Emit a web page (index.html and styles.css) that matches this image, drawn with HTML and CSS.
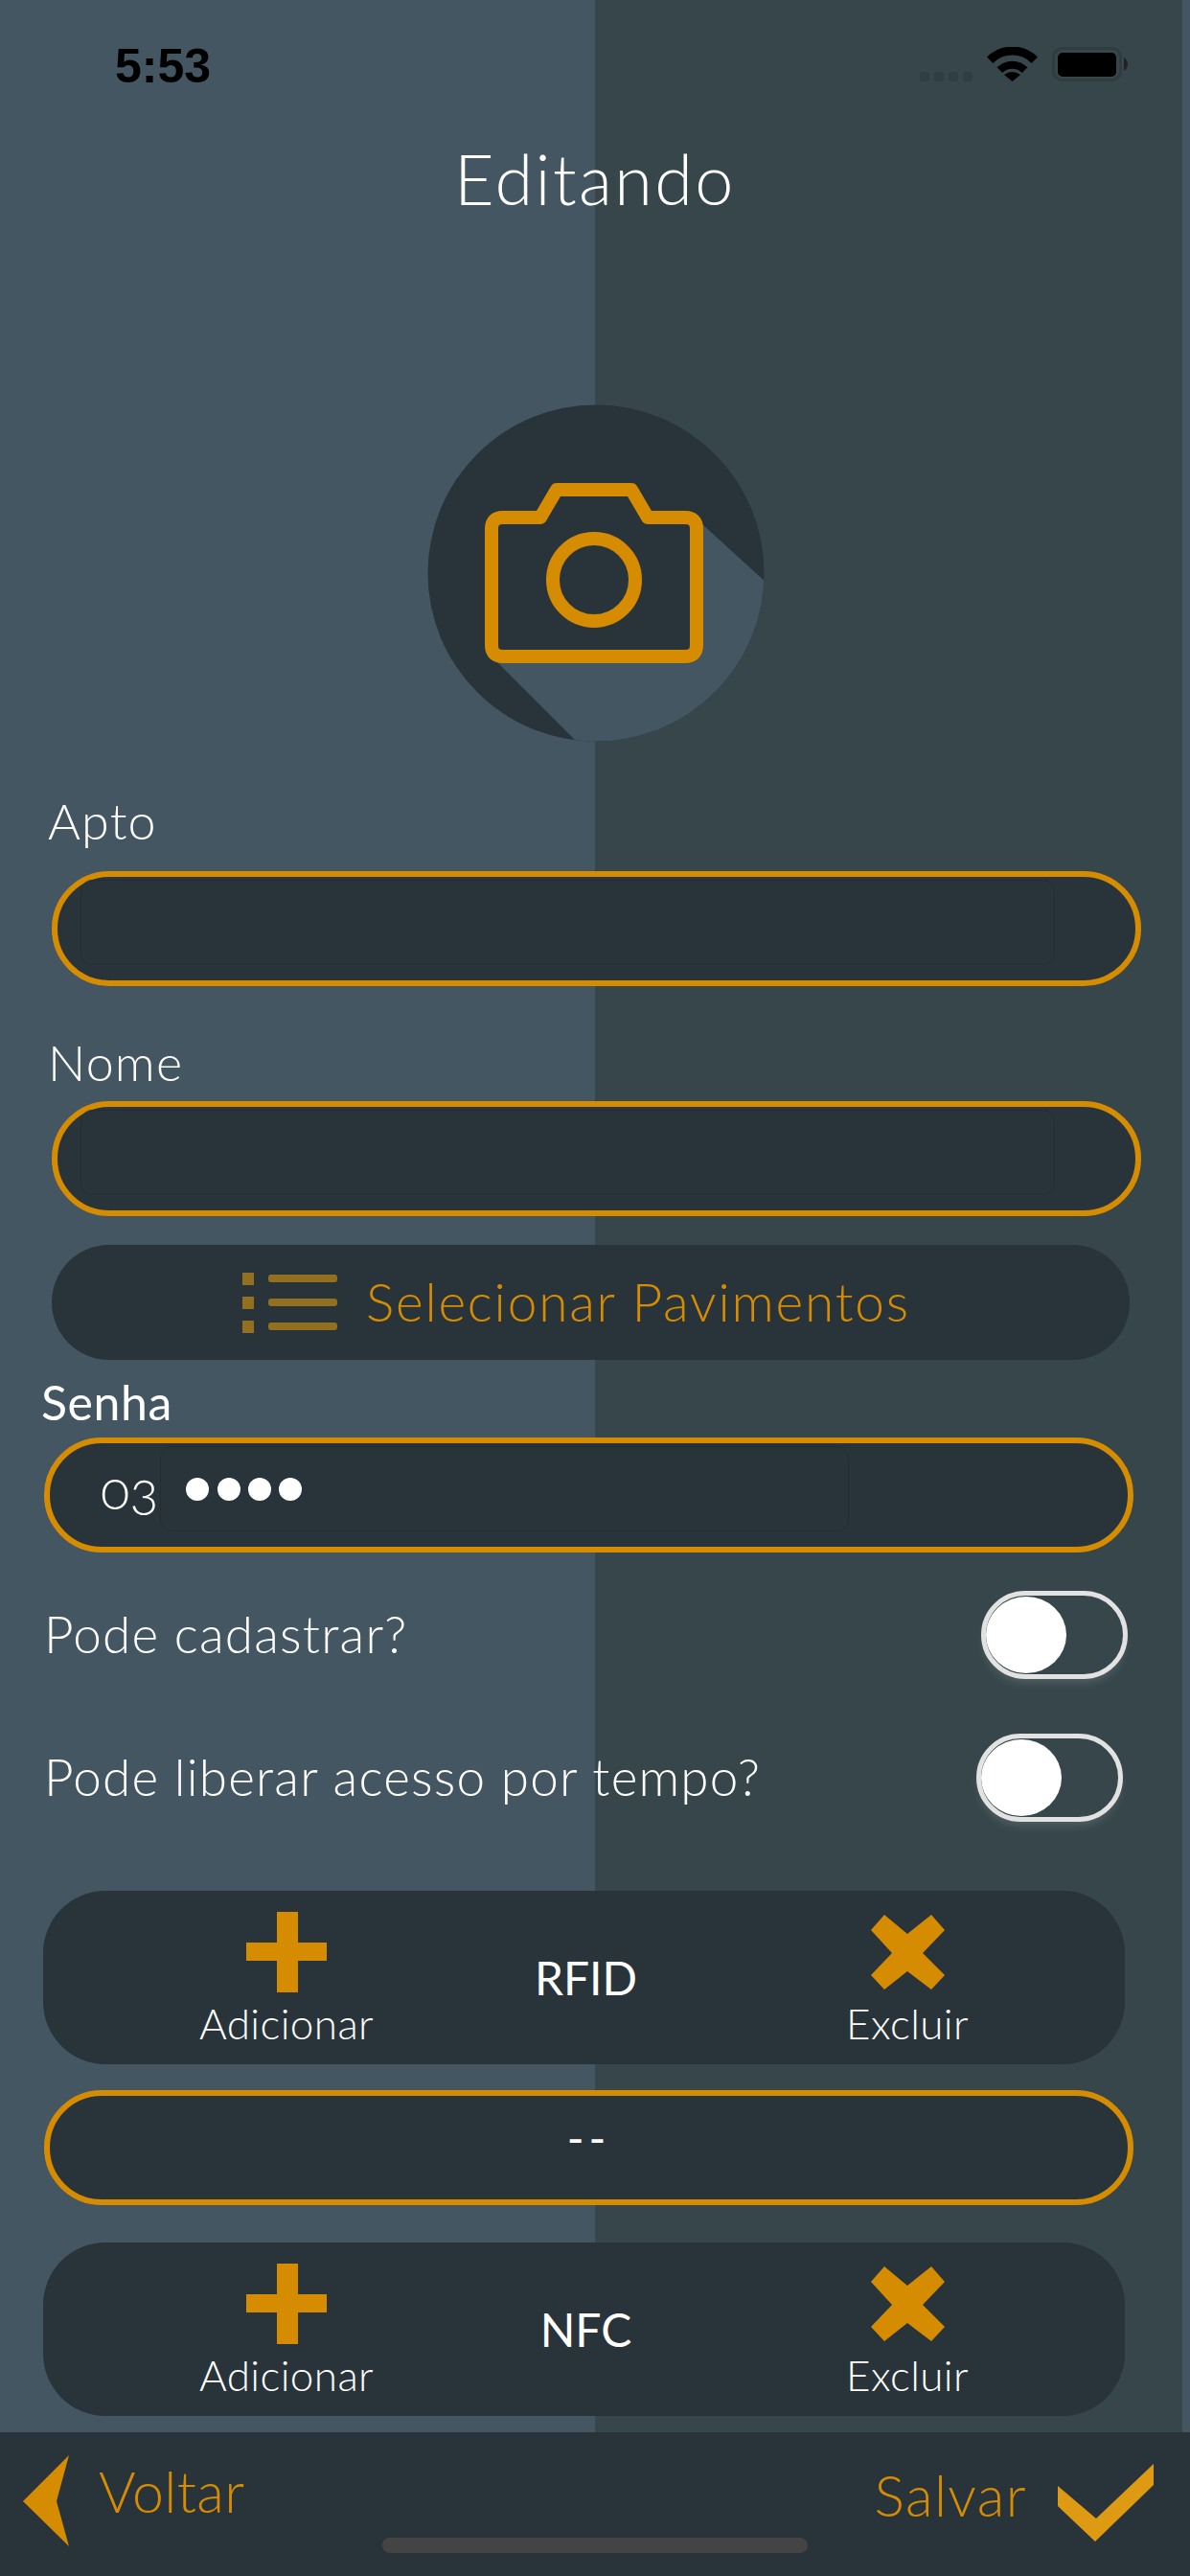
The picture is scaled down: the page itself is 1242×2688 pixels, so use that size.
FILE: index.html
```html
<!DOCTYPE html>
<html lang="pt-BR">
<head>
    <meta charset="UTF-8">
    <meta name="viewport" content="width=device-width, initial-scale=1.0">
    <title>Editando</title>
    <link rel="stylesheet" href="styles.css">
</head>
<body>
    <div class="screen">
        <div class="status">
            <span class="time">5:53</span>
            <svg class="status-icons" viewBox="960 49 217 36">
                <rect x="960" y="75" width="10" height="10" rx="3" fill="#303d42"/>
                <rect x="975" y="75" width="10" height="10" rx="3" fill="#303d42"/>
                <rect x="990" y="75" width="10" height="10" rx="3" fill="#303d42"/>
                <rect x="1005" y="75" width="10" height="10" rx="3" fill="#303d42"/>
                <path d="M1033.2 62.7A33 33 0 0 1 1079.8 62.7" fill="none" stroke="#000" stroke-width="9"/>
                <path d="M1043.4 73.1A18.5 18.5 0 0 1 1069.6 73.1" fill="none" stroke="#000" stroke-width="8"/>
                <path d="M1048 78Q1056.5 72 1065 78L1056.5 85Z" fill="#000"/>
                <rect x="1099.5" y="50.5" width="70" height="33" rx="9" fill="none" stroke="#2f3c40" stroke-width="3"/>
                <rect x="1104" y="55" width="61" height="25" rx="5" fill="#000"/>
                <path d="M1173 60Q1177 63 1177 67Q1177 71 1173 74Z" fill="#222"/>
            </svg>
        </div>

        <h1 class="title">Editando</h1>

        <svg class="photo" viewBox="446 422 352 352">
            <defs>
                <clipPath id="photo-clip"><circle cx="622" cy="598" r="175.5"/></clipPath>
            </defs>
            <g clip-path="url(#photo-clip)">
                <rect x="446" y="422" width="352" height="352" fill="#28343a"/>
                <polygon points="733,547 800,608 800,780 608,780 518,690" fill="#435662"/>
            </g>
            <path d="M513 552Q513 540 525 540H564L581 511H659L676 540H715Q727 540 727 552V673Q727 685 715 685H525Q513 685 513 673Z" fill="#28343a" stroke="#d68c00" stroke-width="14" stroke-linejoin="round"/>
            <circle cx="620" cy="605" r="43" fill="none" stroke="#d68c00" stroke-width="14"/>
        </svg>

        <label class="field-label label-apto">Apto</label>
        <div class="pill pill-apto"><div class="pill-input"></div></div>

        <label class="field-label label-nome">Nome</label>
        <div class="pill pill-nome"><div class="pill-input"></div></div>

        <div class="select-button">
            <div class="list-icon">
                <div class="list-row"><span class="list-dot"></span><span class="list-line"></span></div>
                <div class="list-row"><span class="list-dot"></span><span class="list-line"></span></div>
                <div class="list-row"><span class="list-dot"></span><span class="list-line"></span></div>
            </div>
            <span class="select-text">Selecionar Pavimentos</span>
        </div>

        <label class="field-label label-senha">Senha</label>
        <div class="pill pill-senha">
            <span class="prefix">03</span>
            <div class="pill-input password">
                <span class="dot"></span><span class="dot"></span><span class="dot"></span><span class="dot"></span>
            </div>
        </div>

        <div class="toggle-row row-cadastrar">
            <span class="toggle-label">Pode cadastrar?</span>
            <div class="toggle"><span class="knob"></span></div>
        </div>
        <div class="toggle-row row-tempo">
            <span class="toggle-label">Pode liberar acesso por tempo?</span>
            <div class="toggle"><span class="knob"></span></div>
        </div>

        <div class="card card-rfid">
            <div class="action">
                <svg class="plus-icon" viewBox="0 0 84 84"><polygon points="32,0 54,0 54,32 84,32 84,51 54,51 54,84 32,84 32,51 0,51 0,32 32,32" fill="#d68c00"/></svg>
                <span class="action-label">Adicionar</span>
            </div>
            <span class="card-title">RFID</span>
            <div class="action">
                <svg class="x-icon" viewBox="0 0 77 78"><polygon points="14,0 38,20 63,0 77,16 54,40 77,63 63,78 38,59 14,78 0,63 22,40 0,16" fill="#d68c00"/></svg>
                <span class="action-label">Excluir</span>
            </div>
        </div>

        <div class="pill pill-value"><span class="value-text">--</span></div>

        <div class="card card-nfc">
            <div class="action">
                <svg class="plus-icon" viewBox="0 0 84 84"><polygon points="32,0 54,0 54,32 84,32 84,51 54,51 54,84 32,84 32,51 0,51 0,32 32,32" fill="#d68c00"/></svg>
                <span class="action-label">Adicionar</span>
            </div>
            <span class="card-title">NFC</span>
            <div class="action">
                <svg class="x-icon" viewBox="0 0 77 78"><polygon points="14,0 38,20 63,0 77,16 54,40 77,63 63,78 38,59 14,78 0,63 22,40 0,16" fill="#d68c00"/></svg>
                <span class="action-label">Excluir</span>
            </div>
        </div>

        <footer class="footer">
            <div class="footer-group back">
                <svg class="back-icon" viewBox="0 0 48 95"><polygon points="0,48 48,0 35,48 48,95" fill="#d68c00"/></svg>
                <span class="footer-text">Voltar</span>
            </div>
            <div class="footer-group save">
                <span class="footer-text">Salvar</span>
                <svg class="check-icon" viewBox="0 0 100 81"><polygon points="0,23 0,44 39,81 100,22 100,0 40,57" fill="#df9a14"/></svg>
            </div>
            <div class="home-bar"></div>
        </footer>
    </div>
</body>
</html>
```

FILE: styles.css
```css
* {
    box-sizing: border-box;
}

body {
    margin: 0;
    font-family: Lato, "Open Sans", sans-serif;
    font-weight: 300;
    color: #fff;
    background-color: #435662;
}

.screen {
    position: relative;
    display: flex;
    flex-direction: column;
    width: 1242px;
    height: 2688px;
    overflow: hidden;
    background: linear-gradient(to right, #435662 621px, #36464a 621px, #36464a 1234px, #435662 1234px);
}

.status {
    display: flex;
    justify-content: space-between;
    align-items: flex-start;
    height: 146px;
    padding: 49px 65px 0 120px;
}

.time {
    margin-top: 2px;
    font-family: "Liberation Sans", Arial, sans-serif;
    font-size: 50px;
    font-weight: 700;
    line-height: 36px;
    color: #000;
}

.status-icons {
    width: 217px;
    height: 36px;
}

.title {
    margin: 0;
    font-size: 72px;
    font-weight: 300;
    line-height: 80px;
    letter-spacing: 2.4px;
    text-align: center;
}

.photo {
    display: block;
    width: 352px;
    height: 352px;
    margin: 196px 0 0 446px;
    flex-shrink: 0;
}

.field-label {
    display: block;
    font-size: 52px;
    line-height: 60px;
    letter-spacing: 1.2px;
}

.label-apto {
    margin: 52px 0 0 50px;
}

.label-nome {
    margin: 49px 0 0 50px;
}

.label-senha {
    margin: 14px 0 0 43px;
    font-size: 50px;
    font-weight: 400;
    letter-spacing: 0.6px;
}

.pill {
    display: flex;
    align-items: flex-start;
    width: 1137px;
    height: 120px;
    border: 6px solid #d68c00;
    border-radius: 60px;
    background-color: #28343a;
    flex-shrink: 0;
}

.pill-apto {
    margin: 23px 0 0 54px;
}

.pill-nome {
    margin: 11px 0 0 54px;
}

.pill-input {
    width: 1017px;
    height: 89px;
    margin: 3px 0 0 24px;
    border: 1px solid #232e33;
    border-radius: 12px;
}

.select-button {
    display: flex;
    align-items: center;
    width: 1125px;
    height: 120px;
    margin: 30px 0 0 54px;
    padding-left: 199px;
    border-radius: 60px;
    background-color: #28343a;
    flex-shrink: 0;
}

.list-icon {
    display: flex;
    flex-direction: column;
    gap: 12px;
    width: 99px;
}

.list-row {
    display: flex;
    align-items: center;
    justify-content: space-between;
    height: 13px;
}

.list-dot {
    width: 12px;
    height: 13px;
    background-color: #92701f;
}

.list-line {
    width: 72px;
    height: 8px;
    border-radius: 3px;
    background-color: #92701f;
}

.select-text {
    margin: 0 0 3px 30px;
    font-size: 55px;
    letter-spacing: 1.8px;
    color: #d68c00;
}

.pill-senha {
    margin: 7px 0 0 46px;
}

.prefix {
    margin: 18px 0 0 53px;
    font-size: 56px;
    line-height: 60px;
    font-variant-numeric: oldstyle-nums;
}

.password {
    display: flex;
    gap: 8.3px;
    width: 719px;
    margin-left: 2px;
    padding: 32px 0 0 26px;
}

.dot {
    width: 24px;
    height: 24px;
    border-radius: 50%;
    background-color: #fff;
}

.toggle-row {
    display: flex;
    align-items: center;
    justify-content: space-between;
    height: 92px;
    padding-left: 46px;
    flex-shrink: 0;
}

.row-cadastrar {
    margin-top: 40px;
    padding-right: 65px;
}

.row-tempo {
    margin-top: 57px;
    padding-right: 70px;
}

.toggle-label {
    margin-bottom: 4px;
    font-size: 53px;
    letter-spacing: 1.2px;
}

.toggle {
    display: flex;
    align-items: center;
    width: 153px;
    height: 92px;
    border: 5px solid #e2e2e2;
    border-radius: 46px;
    box-shadow: 0 7px 10px -3px rgba(255, 255, 255, 0.14);
}

.knob {
    width: 84px;
    height: 80px;
    border-radius: 50%;
    background-color: #fff;
}

.card {
    display: grid;
    grid-template-columns: 240px 408px 240px;
    width: 1129px;
    height: 181px;
    margin-left: 45px;
    padding: 22px 0 0 134px;
    border-radius: 65px;
    background-color: #28343a;
    flex-shrink: 0;
}

.card-rfid {
    margin-top: 72px;
}

.card-nfc {
    margin-top: 39px;
}

.action {
    display: flex;
    flex-direction: column;
    align-items: center;
}

.plus-icon {
    width: 84px;
    height: 84px;
    margin-bottom: 7px;
}

.x-icon {
    width: 77px;
    height: 78px;
    margin: 3px 0 10px;
}

.action-label {
    font-size: 44px;
    line-height: 50px;
    letter-spacing: 0.4px;
}

.card-title {
    align-self: center;
    padding: 0 23px 22px 0;
    font-size: 48px;
    font-weight: 400;
    text-align: center;
}

.pill-value {
    align-items: center;
    justify-content: center;
    margin: 27px 0 0 46px;
    padding-bottom: 22px;
}

.value-text {
    font-size: 48px;
    font-weight: 400;
    letter-spacing: 5px;
}

.footer {
    position: relative;
    display: flex;
    justify-content: space-between;
    height: 150px;
    margin-top: 17px;
    padding: 0 38px 0 24px;
    background-color: #28343a;
    flex-shrink: 0;
}

.footer-group {
    display: flex;
    align-items: flex-start;
}

.back-icon {
    width: 48px;
    height: 95px;
    margin: 24px 31px 0 0;
}

.footer-text {
    font-size: 59px;
    line-height: 70px;
    color: #d68c00;
}

.back .footer-text {
    margin-top: 27px;
    letter-spacing: 0.4px;
}

.save .footer-text {
    margin: 31px 32px 0 0;
    letter-spacing: 1.4px;
}

.check-icon {
    width: 100px;
    height: 81px;
    margin-top: 33px;
}

.home-bar {
    position: absolute;
    left: 399px;
    top: 110px;
    width: 444px;
    height: 16px;
    border-radius: 8px;
    background-color: #444;
}
```
